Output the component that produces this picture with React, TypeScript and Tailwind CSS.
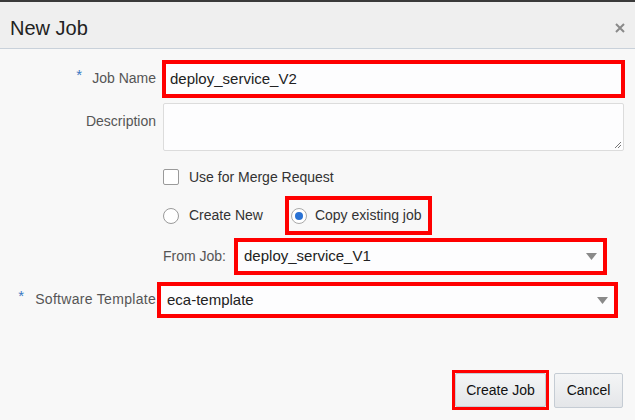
import React from "react";

function Arrow() {
  return (
    <svg width="11" height="7" viewBox="0 0 11 7" className="shrink-0">
      <path d="M0 0 L11 0 L5.5 7 Z" fill="#8a8a8a" />
    </svg>
  );
}

export default function App() {
  return (
    <div
      className="w-[635px] h-[420px] bg-[#f8f8f8] text-[14px] text-[#555] overflow-hidden flex flex-col"
      style={{ fontFamily: '"Liberation Sans", Arial, sans-serif' }}
    >
      {/* header */}
      <div className="h-[49px] shrink-0 bg-[#efefef] border-t-2 border-t-[#3a3a3a] border-b border-b-[#c9d1da] flex items-center justify-between pl-[10px] pr-[10px]">
        <div className="text-[20px] text-[#222] pt-[6px]">New Job</div>
        <svg width="10" height="10" viewBox="0 0 10 10" className="mt-[6px]">
          <path d="M1 1 L9 9 M9 1 L1 9" stroke="#8a8a8a" strokeWidth="2" />
        </svg>
      </div>

      {/* Job Name */}
      <div className="flex items-center mt-[11px] h-[38px]">
        <div className="w-[156px] text-right">
          <span className="text-[#3b78c2] text-[15px] align-top relative top-[-4px] mr-[10px]">*</span>
          Job Name
        </div>
        <div className="ml-[6px] w-[463px] h-[38px] border-4 border-[#ff0000] bg-[#fdfdfe] flex items-center pl-[4px] text-[15px] text-[#222]">
          deploy_service_V2
        </div>
      </div>

      {/* Description */}
      <div className="flex mt-[5px] h-[48px]">
        <div className="w-[156px] text-right pt-[8px]">Description</div>
        <div className="ml-[7px] w-[461px] h-[48px] border border-[#dcdcdc] rounded-[2px] bg-[#fdfdfe] relative">
          <svg width="8" height="8" viewBox="0 0 8 8" className="absolute right-[1px] bottom-[1px]">
            <path d="M7 1 L1 7 M7 4 L4 7" stroke="#777" strokeWidth="1" />
          </svg>
        </div>
      </div>

      {/* checkbox */}
      <div className="flex items-center mt-[18px] ml-[163px] h-[16px]">
        <div className="w-[16px] h-[16px] border border-[#9a9a9a] rounded-[2px] bg-white" />
        <span className="ml-[10px] text-[#333]">Use for Merge Request</span>
      </div>

      {/* radios */}
      <div className="flex items-center mt-[11px] ml-[163px] h-[39px]">
        <div className="w-[16px] h-[16px] border border-[#9a9a9a] rounded-full bg-white" />
        <span className="ml-[10px] text-[#333]">Create New</span>
        <div className="ml-[22px] w-[147px] h-[39px] border-4 border-[#ff0000] flex items-center pl-[2px]">
          <div className="w-[16px] h-[16px] border border-[#a9a9a9] rounded-full bg-white flex items-center justify-center">
            <div className="w-[8px] h-[8px] rounded-full bg-[#2a72d4]" />
          </div>
          <span className="ml-[8px] text-[#333]">Copy existing job</span>
        </div>
      </div>

      {/* From Job */}
      <div className="flex items-center mt-[3px] ml-[163px] h-[37px]">
        <span className="text-[#555]">From Job:</span>
        <div className="ml-[8px] w-[373px] h-[37px] border-4 border-[#ff0000] bg-[#fdfdfe] flex items-center justify-between pl-[6px] pr-[6px] text-[15px] text-[#222]">
          <span>deploy_service_V1</span>
          <Arrow />
        </div>
      </div>

      {/* Software Template */}
      <div className="flex items-center mt-[7px] h-[36px]">
        <div className="w-[156px] text-right">
          <span className="text-[#3b78c2] text-[15px] align-top relative top-[-4px] mr-[11px]">*</span>
          <span className="tracking-[0.3px]">Software Template</span>
        </div>
        <div className="ml-[1px] w-[461px] h-[36px] border-4 border-[#ff0000] bg-[#fdfdfe] flex items-center justify-between pl-[6px] pr-[6px] text-[15px] text-[#222]">
          <span>eca-template</span>
          <Arrow />
        </div>
      </div>

      {/* buttons */}
      <div className="flex items-center justify-end mt-[52px] pr-[12px]">
        <div className="w-[97px] h-[40px] border-[3px] border-[#ff0000] flex">
          <button className="flex-1 bg-gradient-to-b from-[#f4f5f6] to-[#e4e6e9] border border-[#c5ccd4] rounded-[2px] text-[#111] text-[14px]">
            Create Job
          </button>
        </div>
        <button className="ml-[5px] w-[69px] h-[35px] bg-gradient-to-b from-[#f4f5f6] to-[#e4e6e9] border border-[#c5ccd4] rounded-[2px] text-[#111] text-[14px]">
          Cancel
        </button>
      </div>
    </div>
  );
}
